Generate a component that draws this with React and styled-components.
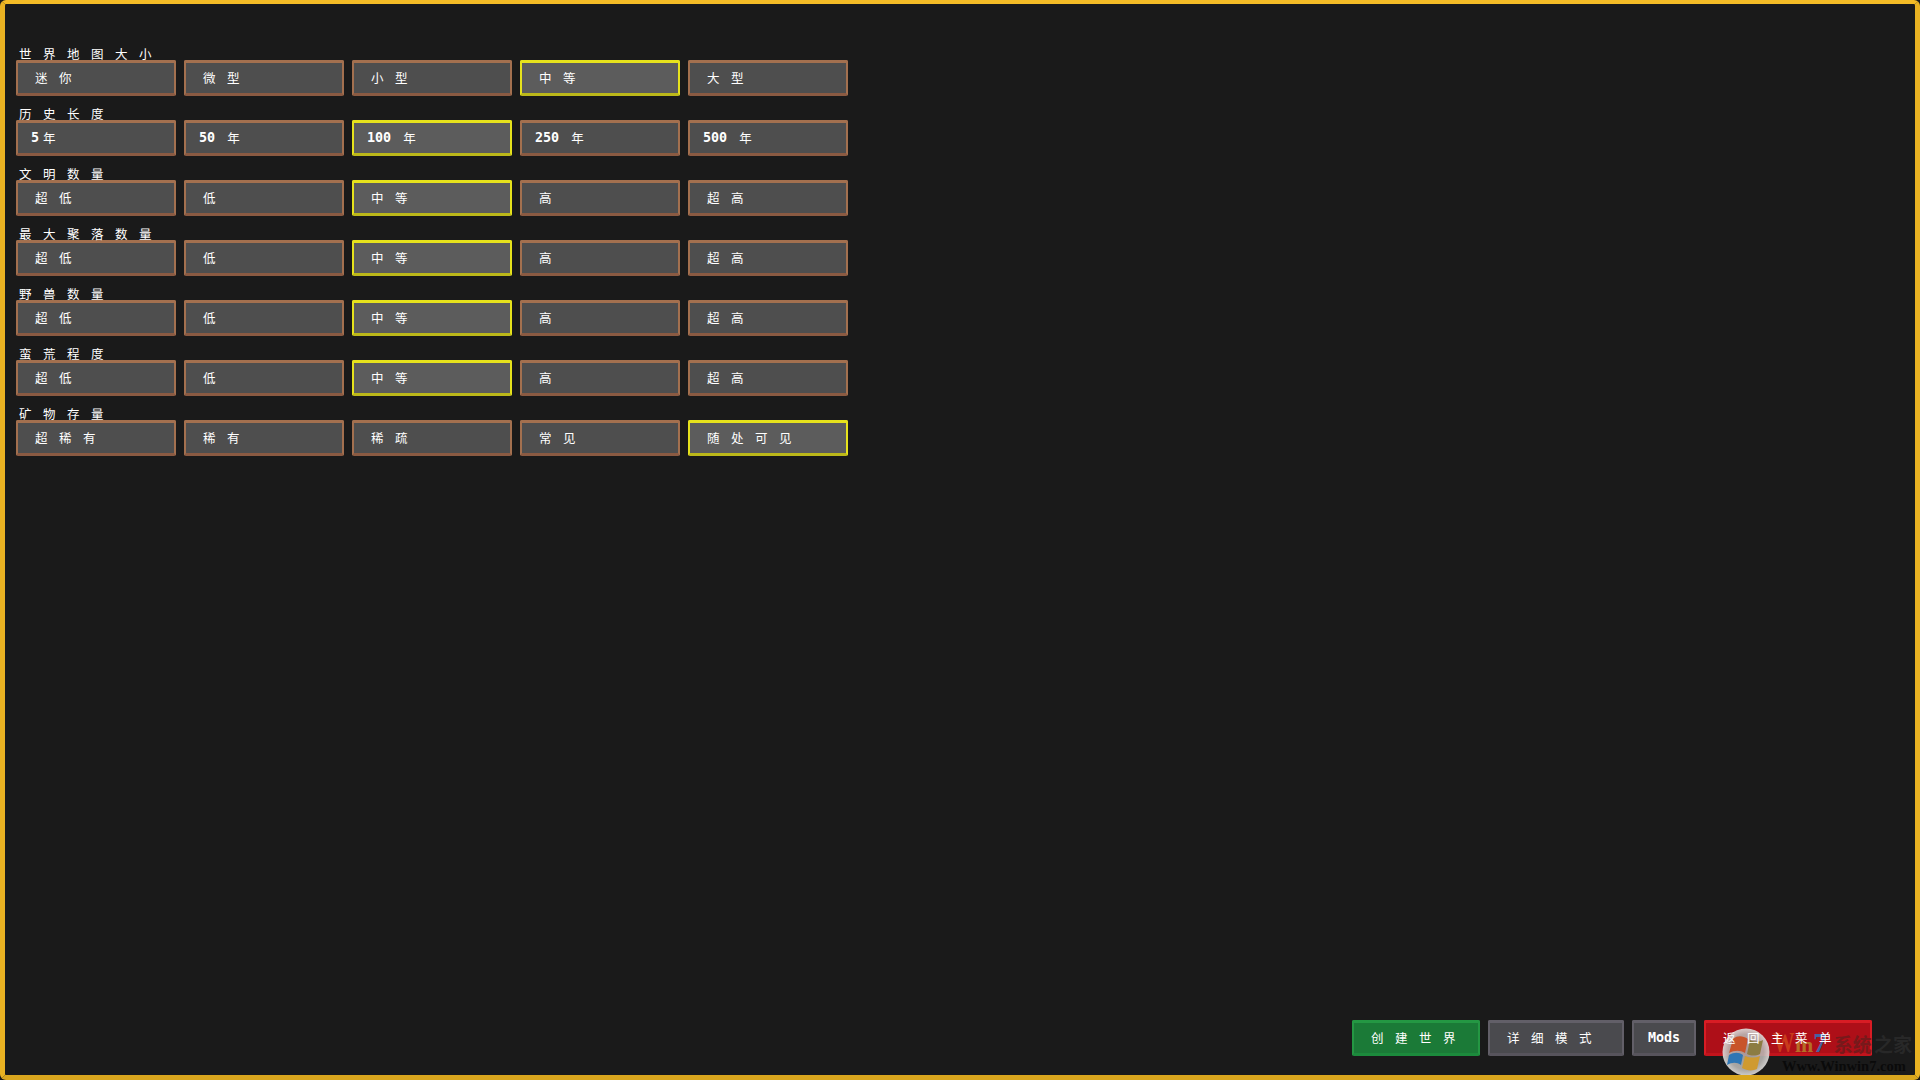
import React from 'react';
import styled, { createGlobalStyle } from 'styled-components';

const GlobalStyle = createGlobalStyle`
  html, body {
    margin: 0;
    padding: 0;
    background: #1a1a1a;
  }
`;

const Frame = styled.div`
  position: relative;
  box-sizing: border-box;
  width: 1920px;
  height: 1080px;
  overflow: hidden;
  display: flex;
  flex-direction: column;
  justify-content: space-between;
  padding: 44px 43px 19px 11px;
  background: #1a1a1a;
  border: 5px solid #e9b222;
  border-top: 4px solid #f4bb26;
  border-bottom-color: #d9a61e;
  border-radius: 6px;
  color: #fff;
  font-family: "DejaVu Sans Mono", "Liberation Mono", "Noto Sans CJK SC", monospace;
`;

const Options = styled.div`
  display: flex;
  flex-direction: column;
  gap: 12px;
`;

const Section = styled.section`
  display: flex;
  flex-direction: column;
`;

const SectionLabel = styled.div`
  display: flex;
  height: 12px;
  margin-left: -1px;
  align-items: center;
`;

const ButtonRow = styled.div`
  display: flex;
  gap: 8px;
`;

const Choice = styled.div`
  box-sizing: border-box;
  width: 160px;
  height: 36px;
  display: flex;
  align-items: center;
  padding-left: 13px;
  border-style: solid;
  border-width: 3px 2px;
  border-color: ${(p) => (p.$active ? '#e6e21c' : '#a3704f')};
  border-bottom-color: ${(p) => (p.$active ? '#bcb81a' : '#8a5a42')};
  border-radius: 2px;
  background: ${(p) => (p.$active ? '#5c5c5c' : '#4e4e4e')};
`;

const Footer = styled.div`
  display: flex;
  justify-content: flex-end;
  gap: 8px;
`;

const tones = {
  green: { bg: '#1b7a37', top: '#249743', bottom: '#1c8a3c' },
  grey: { bg: '#4a4a4e', top: '#625f68', bottom: '#57545c' },
  red: { bg: '#ae0f18', top: '#d81c24', bottom: '#c2141c' },
};

const ActionButton = styled.div`
  box-sizing: border-box;
  width: ${(p) => p.$width}px;
  height: 36px;
  display: flex;
  align-items: center;
  justify-content: ${(p) => (p.$center ? 'center' : 'flex-start')};
  padding-left: ${(p) => (p.$center ? 0 : 13)}px;
  background: ${(p) => tones[p.$tone].bg};
  border-style: solid;
  border-width: 3px 2px;
  border-color: ${(p) => tones[p.$tone].top};
  border-bottom-color: ${(p) => tones[p.$tone].bottom};
  border-radius: 2px;
`;

// z-index keeps the button captions above the watermark, as in the picture
const Cjk = styled.span`
  position: relative;
  z-index: 1;
  display: inline-block;
  box-sizing: border-box;
  width: 24px;
  padding-left: 4px;
  font-family: "Noto Sans CJK SC", sans-serif;
  font-size: 12.5px;
  line-height: 14px;
  font-weight: 400;
`;

const Latin = styled.span`
  font-size: 13.4px;
  line-height: 14px;
  font-weight: 700;
  white-space: pre;
`;

const Watermark = styled.div`
  position: absolute;
  left: 1718px;
  top: 1024px;
  width: 192px;
  height: 52px;
  pointer-events: none;
`;

const WinBadge = styled.svg`
  position: absolute;
  left: -5px;
  top: -3px;
  width: 56px;
  height: 52px;
`;

const Brand = styled.div`
  position: absolute;
  left: 50px;
  top: 0;
  display: flex;
  align-items: baseline;
  line-height: 28px;
  opacity: 0.8;
`;

const BrandMark = styled.span`
  display: inline-block;
  color: ${(p) => p.$color};
  font-family: ${(p) => (p.$cjk ? '"Noto Sans CJK SC", sans-serif' : '"Liberation Serif", serif')};
  font-weight: 700;
  font-size: ${(p) => p.$size}px;
  margin-left: ${(p) => p.$gap || 0}px;
`;

const BrandW = styled(BrandMark)`
  transform: scaleX(0.72);
  transform-origin: left center;
  margin-right: -8px;
`;

const Site = styled.div`
  position: absolute;
  left: 59px;
  top: 30px;
  font-family: "Liberation Serif", serif;
  font-weight: 700;
  font-size: 14.5px;
  line-height: 16px;
  color: #0a0a0a;
`;

const isCjk = (ch) => /[\u4e00-\u9fff]/.test(ch);

// walks the string so each han character gets its own wide cell, like the game font
const Spaced = ({ text }) => {
  const parts = [];
  let run = '';
  [...text].forEach((ch, i) => {
    if (isCjk(ch)) {
      if (run) parts.push(<Latin key={`l${i}`}>{run}</Latin>);
      run = '';
      parts.push(<Cjk key={i}>{ch}</Cjk>);
    } else {
      run += ch;
    }
  });
  if (run) parts.push(<Latin key="end">{run}</Latin>);
  return <>{parts}</>;
};

const sections = [
  { label: '世界地图大小', options: ['迷你', '微型', '小型', '中等', '大型'], active: 3 },
  { label: '历史长度', options: ['5年', '50 年', '100 年', '250 年', '500 年'], active: 2 },
  { label: '文明数量', options: ['超低', '低', '中等', '高', '超高'], active: 2 },
  { label: '最大聚落数量', options: ['超低', '低', '中等', '高', '超高'], active: 2 },
  { label: '野兽数量', options: ['超低', '低', '中等', '高', '超高'], active: 2 },
  { label: '蛮荒程度', options: ['超低', '低', '中等', '高', '超高'], active: 2 },
  { label: '矿物存量', options: ['超稀有', '稀有', '稀疏', '常见', '随处可见'], active: 4 },
];

const actions = [
  { text: '创建世界', tone: 'green', width: 128 },
  { text: '详细模式', tone: 'grey', width: 136 },
  { text: 'Mods', tone: 'grey', width: 64, center: true },
  { text: '返回主菜单', tone: 'red', width: 168 },
];

export default function App() {
  return (
    <>
      <GlobalStyle />
      <Frame>
        <Options>
          {sections.map((s) => (
            <Section key={s.label}>
              <SectionLabel>
                <Spaced text={s.label} />
              </SectionLabel>
              <ButtonRow>
                {s.options.map((opt, i) => (
                  <Choice key={opt} $active={i === s.active}>
                    <Spaced text={opt} />
                  </Choice>
                ))}
              </ButtonRow>
            </Section>
          ))}
        </Options>
        <Footer>
          {actions.map((a) => (
            <ActionButton key={a.text} $tone={a.tone} $width={a.width} $center={a.center}>
              <Spaced text={a.text} />
            </ActionButton>
          ))}
        </Footer>
        <Watermark>
          <WinBadge viewBox="0 0 56 52">
            <defs>
              <radialGradient id="disc" cx="50%" cy="50%" r="50%">
                <stop offset="0%" stopColor="#a8a5a2" />
                <stop offset="75%" stopColor="#b9b6b3" />
                <stop offset="100%" stopColor="#e0dedc" />
              </radialGradient>
            </defs>
            <circle cx="28" cy="27" r="23.5" fill="url(#disc)" opacity="0.9" />
            <path d="M15 14 C20 10 25 11 30 14 L27 28 C22 25 17 25 11 28 Z" fill="#c8542a" />
            <path d="M32 15 C36 17 41 17 45 15 L42 29 C38 31 33 31 29 29 Z" fill="#8c7c42" />
            <path d="M11 30 C16 27 21 27 25 30 L23 40 C19 37 14 37 9 40 Z" fill="#2f76b4" />
            <path d="M27 31 C32 33 37 33 42 31 L39 44 C35 46 29 46 24 43 Z" fill="#cf9a30" />
          </WinBadge>
          <Brand>
            <BrandW $color="#d0481c" $size={30}>W</BrandW>
            <BrandMark $color="#b9862a" $size={22}>in</BrandMark>
            <BrandMark $color="#2a76c4" $size={27}>7</BrandMark>
            <BrandMark $color="#6a1c1c" $size={19} $cjk $gap={7}>系统</BrandMark>
            <BrandMark $color="#2c2c2c" $size={19} $cjk $gap={2}>之家</BrandMark>
          </Brand>
          <Site>Www.Winwin7.com</Site>
        </Watermark>
      </Frame>
    </>
  );
}
